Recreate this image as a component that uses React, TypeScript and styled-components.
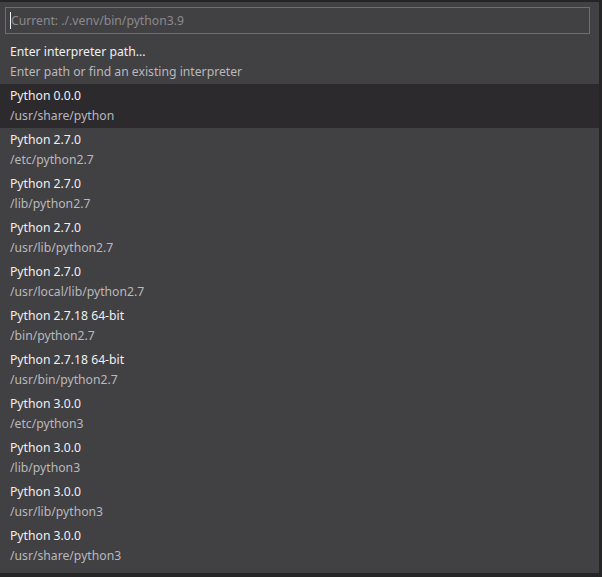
import React from 'react';
import styled, { createGlobalStyle } from 'styled-components';

const GlobalStyle = createGlobalStyle`
  html, body {
    margin: 0;
    padding: 0;
    background: #252526;
  }
  body {
    font-family: 'Noto Sans', 'Open Sans', sans-serif;
  }
`;

const Screen = styled.div`
  width: 602px;
  height: 577px;
  padding-top: 2px;
  box-sizing: border-box;
  overflow: hidden;
  background: #252526;
`;

const Picker = styled.div`
  width: 599px;
  height: 571px;
  background: #414043;
  display: flex;
  flex-direction: column;
  box-sizing: border-box;
`;

const InputWrap = styled.div`
  padding: 5px 9px 5px 5px;
`;

const Input = styled.div`
  height: 25px;
  border: 1px solid #6e6d70;
  display: flex;
  align-items: center;
  padding-left: 4px;
  font-size: 12.2px;
  color: #8b8a8d;
`;

const Caret = styled.span`
  width: 1px;
  height: 17px;
  background: #f2f2f2;
`;

const List = styled.div`
  margin-top: 1px;
  display: flex;
  flex-direction: column;
`;

const Row = styled.div<{ $selected?: boolean }>`
  height: 44px;
  box-sizing: border-box;
  padding: 2px 0 0 10px;
  display: flex;
  flex-direction: column;
  background: ${(p) => (p.$selected ? '#2c2a2d' : 'transparent')};
`;

const Label = styled.div`
  font-size: 12.2px;
  line-height: 20px;
  color: #f0f0f0;
  white-space: nowrap;
`;

const Detail = styled.div`
  font-size: 12.2px;
  line-height: 20px;
  color: #b9b8bb;
  white-space: nowrap;
`;

const items = [
  ['Python 0.0.0', '/usr/share/python'],
  ['Python 2.7.0', '/etc/python2.7'],
  ['Python 2.7.0', '/lib/python2.7'],
  ['Python 2.7.0', '/usr/lib/python2.7'],
  ['Python 2.7.0', '/usr/local/lib/python2.7'],
  ['Python 2.7.18 64-bit', '/bin/python2.7'],
  ['Python 2.7.18 64-bit', '/usr/bin/python2.7'],
  ['Python 3.0.0', '/etc/python3'],
  ['Python 3.0.0', '/lib/python3'],
  ['Python 3.0.0', '/usr/lib/python3'],
  ['Python 3.0.0', '/usr/share/python3'],
];

export default function App() {
  return (
    <Screen>
      <GlobalStyle />
      <Picker>
        <InputWrap>
          <Input>
            <Caret />
            Current: ./.venv/bin/python3.9
          </Input>
        </InputWrap>
        <List>
          <Row>
            <Label>Enter interpreter path...</Label>
            <Detail>Enter path or find an existing interpreter</Detail>
          </Row>
          {items.map(([label, path], i) => (
            <Row key={i} $selected={i === 0}>
              <Label>{label}</Label>
              <Detail>{path}</Detail>
            </Row>
          ))}
        </List>
      </Picker>
    </Screen>
  );
}
